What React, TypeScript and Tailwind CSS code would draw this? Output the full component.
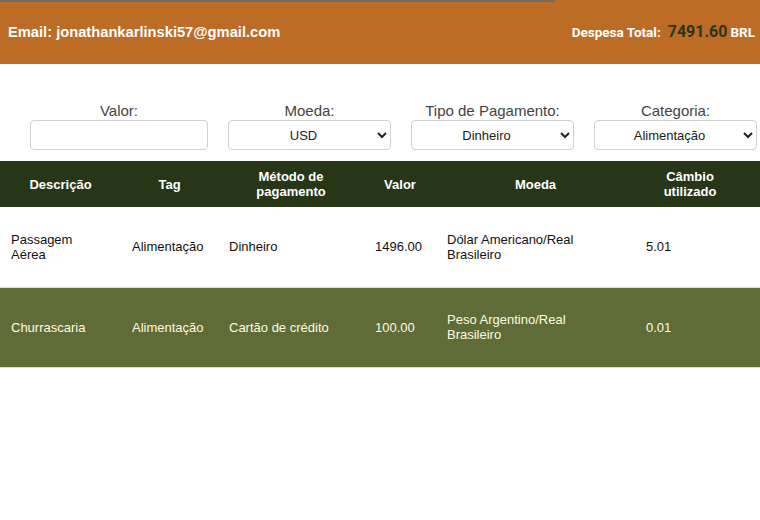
import React from 'react'

const rows = [
  {
    descricao: 'Passagem Aérea',
    tag: 'Alimentação',
    metodo: 'Dinheiro',
    valor: '1496.00',
    moeda: 'Dólar Americano/Real Brasileiro',
    cambio: '5.01'
  },
  {
    descricao: 'Churrascaria',
    tag: 'Alimentação',
    metodo: 'Cartão de crédito',
    valor: '100.00',
    moeda: 'Peso Argentino/Real Brasileiro',
    cambio: '0.01'
  }
]

const Field = ({ label, children }: { label: string; children: React.ReactNode }) => (
  <label className="flex flex-col items-center">
    <span className="text-[15px] leading-[19px] text-[#444]">{label}</span>
    {children}
  </label>
)

const selectClass =
  'h-[30px] w-[163px] rounded-[4px] border border-[#d0d0d0] bg-white text-[13px] text-[#222] text-center [text-align-last:center] px-2'

export default function App() {
  return (
    <div className="w-[760px] h-[520px] bg-white font-['Liberation_Sans',Arial,sans-serif]">
      <header className="relative flex h-[64px] items-center justify-between bg-[#bc6c25] pl-2 pr-[5px]">
        <div className="absolute left-0 top-0 h-[2px] w-[555px] bg-[#6b6b6b]" />
        <p className="text-[14.7px] font-bold text-white">Email: jonathankarlinski57@gmail.com</p>
        <p className="flex items-baseline font-['Roboto',sans-serif] text-[13.5px] font-bold text-white">
          Despesa Total:
          <span className="ml-[7px] mr-[3px] text-[16px] text-[#283618]">7491.60</span>
          BRL
        </p>
      </header>

      <form className="mt-[37px] flex gap-[20px] pl-[30px]">
        <Field label="Valor:">
          <input type="text" className="h-[30px] w-[178px] rounded-[4px] border border-[#d0d0d0] bg-white" />
        </Field>
        <Field label="Moeda:">
          <select className={selectClass} defaultValue="USD">
            <option>USD</option>
          </select>
        </Field>
        <Field label="Tipo de Pagamento:">
          <select className={selectClass} defaultValue="Dinheiro">
            <option>Dinheiro</option>
          </select>
        </Field>
        <Field label="Categoria:">
          <select className={selectClass} defaultValue="Alimentação">
            <option>Alimentação</option>
          </select>
        </Field>
      </form>

      <table className="mt-[11px] w-[760px] table-fixed border-collapse text-[13px] leading-[15px]">
        <colgroup>
          <col className="w-[121px]" />
          <col className="w-[97px]" />
          <col className="w-[146px]" />
          <col className="w-[72px]" />
          <col className="w-[199px]" />
          <col className="w-[125px]" />
        </colgroup>
        <thead>
          <tr className="h-[46px] bg-[#283618] text-white">
            <th className="px-[11px] font-bold">Descrição</th>
            <th className="px-[11px] font-bold">Tag</th>
            <th className="px-[11px] font-bold">Método de pagamento</th>
            <th className="px-[11px] font-bold">Valor</th>
            <th className="px-[11px] font-bold">Moeda</th>
            <th className="pl-[11px] pr-[26px] font-bold">Câmbio utilizado</th>
          </tr>
        </thead>
        <tbody>
          {rows.map((row, i) => (
            <tr
              key={row.descricao}
              className={
                i % 2 === 0
                  ? 'h-[80px] border-b border-[#dcdcdc] bg-white text-[#111]'
                  : 'h-[80px] border-b border-[#dcdcdc] bg-[#606c38] text-[#fefae0]'
              }
            >
              <td className="pl-[11px] pr-[20px]">{row.descricao}</td>
              <td className="pl-[11px] pr-[4px]">{row.tag}</td>
              <td className="pl-[11px] pr-[20px]">{row.metodo}</td>
              <td className="pl-[11px] pr-[4px]">{row.valor}</td>
              <td className="pl-[11px] pr-[20px]">{row.moeda}</td>
              <td className="pl-[11px] pr-[20px]">{row.cambio}</td>
            </tr>
          ))}
        </tbody>
      </table>
    </div>
  )
}
